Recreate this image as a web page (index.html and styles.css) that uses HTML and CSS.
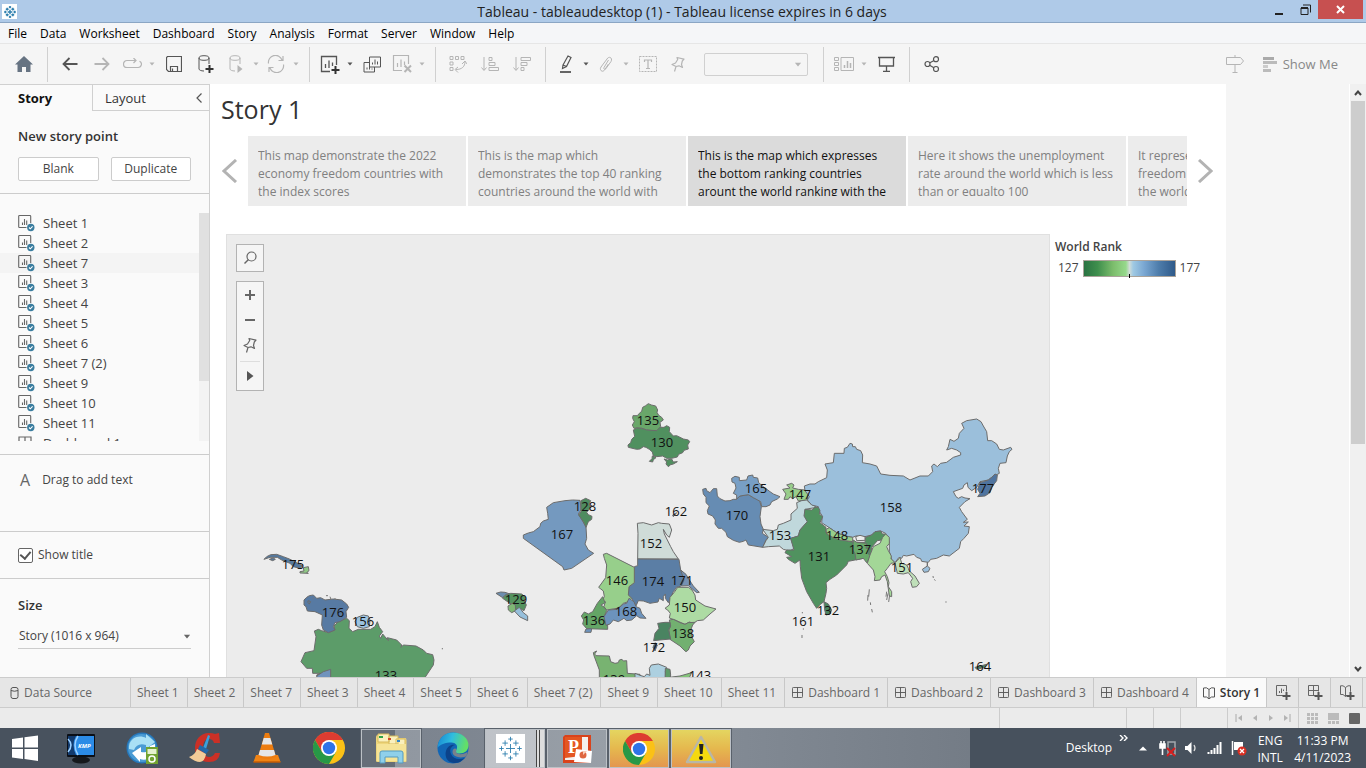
FILE: index.html
```html
<!DOCTYPE html>
<html lang="en">
<head>
<meta charset="utf-8">
<title>Tableau - tableaudesktop (1)</title>
<link rel="stylesheet" href="styles.css">
</head>
<body>
<svg class="defs" aria-hidden="true">
  <symbol id="logo" viewBox="0 0 30 30"><path d="M15 10v10M10 15h10M15 2v5M12.500 4.500h5M15 23v5M12.500 25.500h5M2.500 15h5M5 12.500v5M22.500 15h5M25 12.500v5M9 6v6M6 9h6M21 6v6M18 9h6M9 18v6M6 21h6M21 18v6M18 21h6" fill="none" stroke="#2e7fae"/></symbol>
  <symbol id="sheet" viewBox="0 0 18 18"><path d="M8.500 13.500h-7a.8.8 0 0 1-.8-.8V2.300a.8.8 0 0 1 .8-.8h10.400a.8.8 0 0 1 .8.800V9M4.500 11V8.500M6.500 11V5M8.700 11V6.500" fill="none" stroke="#666" stroke-width="1.100"/><circle cx="12.800" cy="13.500" r="3.700" fill="#3a7d9f"/><path d="M11 13.500l1.300 1.300 2.300-2.500" fill="none" stroke="#fff" stroke-width="1.100"/></symbol>
  <symbol id="dash" viewBox="0 0 12 12"><path d="M.5 1.500a1 1 0 0 1 1-1h9a1 1 0 0 1 1 1v9a1 1 0 0 1-1 1h-9a1 1 0 0 1-1-1zM6 .5v11M.5 6h11" fill="none" stroke="#555"/></symbol>
  <symbol id="book" viewBox="0 0 12 12"><path d="M.5 1L3.500 .8 6 2.500 8.500 .8 11.500 1v9H8.500L6 11.800 3.500 10H.5zM6 2.500v9" fill="none" stroke="#555"/></symbol>
  <symbol id="caret" viewBox="0 0 6 4"><path d="M.5 .5h5L3 3.500z" fill="currentColor"/></symbol>
  <symbol id="pin" viewBox="0 0 14 16"><path d="M6 1.500L13 3.200 11.300 5 10.500 8.500 11.500 11.500 8 9.800 5 10.500 1 8.500 4.500 7 6.700 3.500zM5 10.500L3.500 15.500" fill="none" stroke="currentColor" stroke-width="1.200" stroke-linejoin="round"/></symbol>
  <symbol id="chrome" viewBox="0 0 32 32"><circle cx="16" cy="16" r="16" fill="#fbc116"/><path d="M2.100 8A16 16 0 0 1 29.900 8H16L9 20z" fill="#dd3c31"/><path d="M2.100 8A16 16 0 0 0 16 32l7-12-7 3.500-7-3.500z" fill="#279847"/><circle cx="16" cy="16" r="8" fill="#fff"/><circle cx="16" cy="16" r="6.200" fill="#2f73e8"/></symbol>
</svg>

<header class="titlebar">
  <span class="app-icon"><svg width="14" height="14"><use href="#logo"/></svg></span>
  <h1 class="window-title">Tableau - tableaudesktop (1) - Tableau license expires in 6 days</h1>
  <div class="window-controls">
    <button class="win-btn" aria-label="Minimize"><svg width="10" height="12"><path d="M1 9h8v2H1z" fill="#222"/></svg></button>
    <button class="win-btn" aria-label="Restore"><svg width="11" height="12"><path d="M3 1h7.500v7.500M1 4h7v6.500H1z" fill="none" stroke="#222"/><path d="M1 3h7v2H1z" fill="#222"/></svg></button>
    <button class="win-btn close" aria-label="Close"><svg width="9" height="9"><path d="M1 1l7 7M8 1L1 8" stroke="#fff" stroke-width="2"/></svg></button>
  </div>
</header>

<nav class="menubar">
  <button>File</button><button>Data</button><button>Worksheet</button><button>Dashboard</button><button>Story</button><button>Analysis</button><button>Format</button><button>Server</button><button>Window</button><button>Help</button>
</nav>

<div class="toolbar">
  <button class="tool" aria-label="Home"><svg width="18" height="16"><path d="M9 0L18 8.500h-2.500V16h-4.500v-5H7v5H2.500V8.500H0z" fill="#667382"/></svg></button>
  <span class="sep"></span>
  <button class="tool dark" aria-label="Back"><svg width="16" height="14"><path d="M15.500 7H1.500M7.500 1l-6 6 6 6" fill="none" stroke="currentColor" stroke-width="1.800"/></svg></button>
  <button class="tool" aria-label="Forward"><svg width="16" height="14"><path d="M.5 7h14M8.500 1l6 6-6 6" fill="none" stroke="currentColor" stroke-width="1.800"/></svg></button>
  <button class="tool slim" aria-label="Redo"><svg width="19" height="12"><path d="M6 2.500H4a3.300 3.300 0 0 0 0 7h11a3.300 3.300 0 0 0 1.500-6.300M5 2.500h8M10.500 0L13 2.500 10.500 5" fill="none" stroke="currentColor" stroke-width="1.200"/></svg></button>
  <button class="drop" aria-label="Redo options"><svg width="6" height="4"><use href="#caret"/></svg></button>
  <button class="tool dark" aria-label="Save"><svg width="16" height="16"><path d="M1.500 .5h14v15h-13l-2-2V1.500zM4.500 15v-4.500h7V15M6.500 15v-2.500" fill="none" stroke="currentColor" stroke-width="1.200"/></svg></button>
  <button class="tool dark" aria-label="New data source"><svg width="16" height="18"><ellipse cx="6" cy="3" rx="5" ry="2.300" fill="none" stroke="currentColor"/><path d="M1 3v11c0 1 2 2 5 2M11 3v6" fill="none" stroke="currentColor"/><path d="M11.500 10v8M7.500 14h8" stroke="#333" stroke-width="2"/></svg></button>
  <button class="tool slim" aria-label="Pause updates"><svg width="15" height="18"><ellipse cx="6" cy="3" rx="5" ry="2.300" fill="none" stroke="currentColor"/><path d="M1 3v11c0 1 2 2 5 2M11 3v6" fill="none" stroke="currentColor"/><path d="M8.500 10l5 4-5 4z" fill="currentColor"/></svg></button>
  <button class="drop" aria-label="Update options"><svg width="6" height="4"><use href="#caret"/></svg></button>
  <button class="tool slim" aria-label="Refresh"><svg width="18" height="18"><path d="M1.500 8.500A7 7 0 0 1 15 5M16.500 9.500A7 7 0 0 1 3 13M16 1v4.500h-4.500M2 17v-4.500h4.500" fill="none" stroke="currentColor" stroke-width="1.200"/></svg></button>
  <button class="drop" aria-label="Refresh options"><svg width="6" height="4"><use href="#caret"/></svg></button>
  <span class="sep"></span>
  <button class="tool slim dark" aria-label="New worksheet"><svg width="20" height="19"><path d="M10 16.500H1.500V1.500h15V10M5.500 13V9M9 13V5.500M12.500 11V7.500" fill="none" stroke="currentColor" stroke-width="1.300"/><path d="M15.500 11v8M11.500 15h8" stroke="#333" stroke-width="2"/></svg></button>
  <button class="drop dark" aria-label="New sheet options"><svg width="6" height="4"><use href="#caret"/></svg></button>
  <button class="tool dark" aria-label="Duplicate"><svg width="18" height="17"><path d="M6.500 1h11v10h-11zM9.500 8.500v-2M12 8.500v-5M14.500 8.500v-3M6 6.500H1v9.500h10.500V11M4 13.500v-2M6.500 13.500v-3M9 13.500v-1" fill="none" stroke="currentColor"/></svg></button>
  <button class="tool slim" aria-label="Clear sheet"><svg width="20" height="18"><path d="M10 15.500H1.500V.5h15V9M5.500 12V8M9 12V4.500M12.500 10V6.500" fill="none" stroke="currentColor" stroke-width="1.200"/><path d="M12.500 10.500l6.500 6.500M19 10.500L12.500 17" stroke="currentColor" stroke-width="2"/></svg></button>
  <button class="drop" aria-label="Clear options"><svg width="6" height="4"><use href="#caret"/></svg></button>
  <span class="sep"></span>
  <button class="tool" aria-label="Swap rows and columns"><svg width="18" height="18"><path d="M1 1.500h3v3H1zM6.500 1.500h3v3h-3zM12 1.500h3v3h-3zM1 7h3v3H1zM1 12.500h3v3H1zM16 6.500c0 5-3 8-9 8M13 9l3-3 2 3M9 12l-3 2.500 3 3" fill="none" stroke="currentColor"/></svg></button>
  <button class="tool" aria-label="Sort ascending"><svg width="18" height="16"><path d="M3 1v13M.5 11.500L3 14.500l2.500-3M8 1.500h3v3H8zM8 6.500h6v3H8zM8 11.500h9.500v3H8z" fill="none" stroke="currentColor"/></svg></button>
  <button class="tool" aria-label="Sort descending"><svg width="18" height="16"><path d="M3 1v13M.5 11.500L3 14.500l2.500-3M8 1.500h9.500v3H8zM8 6.500h6v3H8zM8 11.500h3v3H8z" fill="none" stroke="currentColor"/></svg></button>
  <span class="sep"></span>
  <button class="tool slim dark" aria-label="Highlight"><svg width="14" height="18"><path d="M1 17h11" stroke="currentColor" stroke-width="1.800"/><path d="M4 10L9 1l3 1.500-4.500 9L3.500 13.500zM4 10l3.500 1.500" fill="none" stroke="currentColor" stroke-width="1.200"/></svg></button>
  <button class="drop dark" aria-label="Highlight options"><svg width="6" height="4"><use href="#caret"/></svg></button>
  <button class="tool slim" aria-label="Group"><svg width="14" height="16"><path d="M9.500 4L5 11.500c-.8 1.500 1 2.500 2 1L12 5.500c2-3.500-2-6-4-2.500L2 11c-2 3 1.500 6 3.500 3l4-6" fill="none" stroke="currentColor"/></svg></button>
  <button class="drop" aria-label="Group options"><svg width="6" height="4"><use href="#caret"/></svg></button>
  <button class="tool" aria-label="Show mark labels"><svg width="18" height="16"><path d="M.5 .5h17v15H.5z" fill="none" stroke="currentColor" stroke-dasharray="2 1"/><path d="M5.500 6V4h7v2M9 4v8.500M7 12.500h4" fill="none" stroke="currentColor" stroke-width="1.200"/></svg></button>
  <button class="tool slim" aria-label="Fix axes"><svg width="14" height="16"><use href="#pin"/></svg></button>
  <button class="fit" aria-label="Fit"><svg width="8" height="5" viewBox="0 0 6 4"><use href="#caret"/></svg></button>
  <span class="sep"></span>
  <button class="tool slim" aria-label="Show cards"><svg width="20" height="15"><path d="M.5 .5h4v3h-4zM.5 5.500h4v3h-4zM.5 10.500h4v3h-4zM7 .5h12.500v13H7z" fill="none" stroke="currentColor"/><path d="M10.500 11V8M13.500 11V4M16.500 11V6" stroke="currentColor" stroke-width="1.500"/></svg></button>
  <button class="drop" aria-label="Card options"><svg width="6" height="4"><use href="#caret"/></svg></button>
  <button class="tool dark" aria-label="Presentation mode"><svg width="17" height="16"><path d="M0 1.500h17M1.500 1.500v8.500h14V1.500M8.500 10v5M5 15.300h7" fill="none" stroke="currentColor" stroke-width="1.300"/></svg></button>
  <span class="sep"></span>
  <button class="tool dark" aria-label="Share"><svg width="16" height="16"><path d="M3.500 8L12 3.500M3.500 8l8.500 5" stroke="currentColor" stroke-width="1.200"/><g fill="#f5f5f5" stroke="currentColor" stroke-width="1.200"><circle cx="3.500" cy="8" r="2.500"/><circle cx="12" cy="3.200" r="2.500"/><circle cx="12" cy="13" r="2.500"/></g></svg></button>
  <span class="spacer"></span>
  <button class="tool" aria-label="Guide"><svg width="18" height="18"><path d="M9 0v2M.5 2.500h14l3 3.500-3 3.500H.5zM9 9.500v8M6.500 17.500h5" fill="none" stroke="currentColor"/></svg></button>
  <button class="show-me"><svg width="14" height="15"><path d="M0 0h11v3H0z" fill="#aaa"/><path d="M0 4h14v3H0zM0 12h8v3H0z" fill="#bbb"/><path d="M0 8h5v3H0z" fill="#ccc"/></svg>Show Me</button>
</div>

<main class="workspace">
  <aside class="side">
    <div class="side-tabs">
      <button class="side-tab active">Story</button>
      <button class="side-tab">Layout<svg width="6" height="10"><path d="M5.500 .5L1 5l4.500 4.500" fill="none" stroke="#555" stroke-width="1.200"/></svg></button>
    </div>
    <section class="panel new-point">
      <h2>New story point</h2>
      <div class="point-buttons"><button>Blank</button><button>Duplicate</button></div>
    </section>
    <section class="panel sheets">
      <div class="sheet-scroll">
        <ul>
          <li><svg><use href="#sheet"/></svg>Sheet 1</li>
          <li><svg><use href="#sheet"/></svg>Sheet 2</li>
          <li class="hover"><svg><use href="#sheet"/></svg>Sheet 7</li>
          <li><svg><use href="#sheet"/></svg>Sheet 3</li>
          <li><svg><use href="#sheet"/></svg>Sheet 4</li>
          <li><svg><use href="#sheet"/></svg>Sheet 5</li>
          <li><svg><use href="#sheet"/></svg>Sheet 6</li>
          <li><svg><use href="#sheet"/></svg>Sheet 7 (2)</li>
          <li><svg><use href="#sheet"/></svg>Sheet 9</li>
          <li><svg><use href="#sheet"/></svg>Sheet 10</li>
          <li><svg><use href="#sheet"/></svg>Sheet 11</li>
          <li><svg viewBox="0 0 18 18"><path d="M1 3h12v11H1zM7 3v11M1 8h12" fill="none" stroke="#666" stroke-width="1.200"/></svg>Dashboard 1</li>
        </ul>
        <div class="side-track"><div class="side-thumb"></div></div>
      </div>
    </section>
    <section class="panel drag"><span class="letter">A</span>Drag to add text</section>
    <section class="panel title-toggle"><label><input type="checkbox" checked>Show title</label></section>
    <section class="panel size">
      <h2><label for="size">Size</label></h2>
      <div class="select-wrap"><select id="size"><option>Story (1016 x 964)</option></select><svg width="8" height="5" viewBox="0 0 6 4"><use href="#caret"/></svg></div>
    </section>
  </aside>

  <div class="canvas">
    <article class="story">
      <h2 class="story-title">Story 1</h2>
      <div class="navigator">
        <button class="nav-arrow" aria-label="Previous"><svg width="16" height="24"><path d="M14 1L2 12l12 11" fill="none" stroke="#b3b3b3" stroke-width="3"/></svg></button>
        <div class="captions">
          <button class="caption"><span>This map demonstrate the 2022 economy freedom countries with the index scores</span></button>
          <button class="caption"><span>This is the map which demonstrates the top 40 ranking countries around the world with</span></button>
          <button class="caption current"><span>This is the map which expresses the bottom ranking countries arount the world ranking with the</span></button>
          <button class="caption"><span>Here it shows the unemployment rate around the world which is less than or equalto 100</span></button>
          <button class="caption"><span>It represents the<br>freedom of all<br>the world</span></button>
        </div>
        <button class="nav-arrow" aria-label="Next"><svg width="16" height="24"><path d="M2 1l12 11L2 23" fill="none" stroke="#b3b3b3" stroke-width="3"/></svg></button>
      </div>
      <div class="view">
        <figure class="map">
          <svg class="world" viewBox="227 235 822 442" role="img" aria-label="World Rank map">
            <g class="land" transform="translate(480 390) scale(.33333)">
              <path fill="#69a76a" d="M462 115L457 105 463 95 458 85 459 77 472 77 478 70 485 64 488 52 497 47 505 41 514 45 527 48 533 60 531 67 536 76 545 82 550 90 540 97 542 110 530 123 500 120 485 115 470 114Z"/>
              <path fill="#50905f" d="M460 120L470 114 485 115 500 120 530 122 540 112 552 112 560 107 569 112 568 125 580 138 590 137 600 142 610 147 625 150 629 155 623 165 625 177 612 181 608 188 596 193 592 201 575 205 560 205 548 198 530 200 520 198 517 186 508 178 498 172 490 170 480 177 470 178 445 172 444 165 452 158 455 148 464 139Z"/>
              <path fill="#50905f" d="M552 207L562 210 575 207 580 216 592 215 580 222 572 224 565 230 558 222 560 216ZM508 214L516 206 517 198 528 203 520 209 518 216Z"/>
              <path fill="#7499bf" d="M200 352L220 338 255 332 278 330 300 331 302 345 303 360 295 372 318 410 320 445 315 462 325 480 341 490 275 535 252 540 248 530 130 445 130 435 145 429 160 425 180 410 182 400 190 393 205 388 203 370Z"/>
              <path fill="#4f8c5f" d="M303 332L317 325 332 332 327 342 332 352 320 367 325 374 336 379 335 388 325 395 318 412 310 395 296 375 303 365Z"/>
              <path fill="#cfdcd8" d="M472 400L490 398 515 405 535 398 545 400 568 402 575 420 568 442 560 435 550 418 553 432 572 470 580 485 595 507 473 507 474 430Z"/>
              <path fill="#5b7ea5" d="M473 507L597 508 602 540 610 550 622 563 610 575 604 588 590 592 580 605 570 628 565 638 556 625 556 612 550 620 550 632 538 625 534 636 510 640 490 633 475 632 468 648 455 625 445 615 447 590 463 578 463 530 473 527Z"/>
              <path fill="#7591b3" d="M602 540L618 553 628 570 640 588 658 607 650 608 625 587 604 588 612 570Z"/>
              <path fill="#97cf8b" d="M380 490L463 532 463 578 447 590 445 615 455 625 442 636 430 640 420 650 410 655 380 660 372 650 376 635 365 633 373 620 370 603 356 592 377 563 380 525 373 505 370 493Z"/>
              <path fill="#64a566" d="M368 620L373 633 376 638 363 645 372 651 380 662 372 680 383 705 383 718 320 716 308 702 311 690 304 678 313 666 325 672 338 665 352 640Z"/>
              <path fill="#6c93bd" d="M372 680L385 660 412 658 430 642 440 640 447 625 462 635 468 650 480 655 485 670 498 685 480 684 470 677 455 690 440 692 432 685 415 695 400 690 390 702 378 706ZM318 717L335 716 333 727 314 727Z"/>
              <path fill="#addba3" d="M593 592L625 592 636 600 645 615 647 630 675 648 708 657 690 672 670 690 652 692 640 700 628 696 615 703 585 690 568 684 571 670 563 660 555 655 568 645 570 622 582 608Z"/>
              <path fill="#72b070" d="M568 690L580 688 600 698 615 703 625 698 645 697 638 705 633 718 636 742 643 755 630 768 625 780 618 785 612 780 600 768 570 748 566 720 572 708Z"/>
              <path fill="#4a8461" d="M533 700L555 697 570 697 572 708 566 720 572 747 540 750 521 752 525 730 537 715Z"/>
              <path fill="#3d5e85" d="M519 772L525 758 532 765 525 783ZM578 375L590 368 580 380Z"/>
              <path fill="#6c8eae" d="M48 610L62 606 75 607 90 612 75 616 68 623Z"/>
              <path fill="#54935f" d="M68 625L75 616 92 610 125 612 137 622 133 632 139 645 132 662 118 654 108 660 104 645 90 640Z"/>
              <path fill="#7fb775" d="M84 648L97 640 106 645 107 662 95 668 85 660Z"/>
              <path fill="#96bfdb" d="M103 663L118 652 130 668 143 678 143 692 120 681Z"/>
              <path fill="#78b371" d="M342 797L340 788 350 783 344 792 348 797 388 798 392 815 405 820 415 818 418 810 426 808 430 813 440 812 442 850 480 853 478 880 358 880 358 840Z"/>
              <path fill="#add0e0" d="M465 850L480 856 493 860 500 852 510 856 508 835 514 825 535 822 560 832 556 845 562 880 465 880Z"/>
              <path fill="#5d9c69" d="M556 835L570 838 572 855 568 880 555 880Z"/>
              <path fill="#84c57b" d="M568 862L600 858 635 848 620 880 565 880Z"/>
            </g>
            <g class="land" transform="translate(690 400) scale(.33333)">
              <path fill="#668cb3" d="M38 268L48 265 50 272 60 278 70 266 80 266 82 288 90 296 105 303 120 302 130 298 140 298 150 288 175 284 190 293 208 300 214 320 210 350 213 372 220 388 217 400 235 412 228 420 218 442 175 435 168 420 160 424 148 427 130 421 112 410 108 397 95 385 85 385 75 372 76 360 68 348 54 342 52 332 58 318 48 308 48 292 40 282Z"/>
              <path fill="#789fc5" d="M125 235L135 229 148 232 148 242 170 240 174 228 188 225 190 232 203 234 206 248 220 260 240 275 250 282 270 290 262 297 245 305 240 315 228 320 215 320 212 305 190 293 175 284 150 288 140 297 140 285 130 280 138 264 135 250 126 246Z"/>
              <path fill="#98cd8b" d="M278 268L300 264 290 255 305 250 312 255 308 264 325 268 345 270 355 280 352 300 325 303 318 290 308 296 300 290 295 298 282 298 288 282Z"/>
              <path fill="#c0d8dc" d="M320 308L335 302 350 300 360 310 380 322 345 328 345 345 352 365 330 390 325 408 302 415 312 445 300 453 280 448 268 438 235 440 218 442 228 422 235 412 218 388 250 392 262 388 265 375 280 370 303 360 303 342 322 325Z"/>
              <path fill="#9bbfdb" d="M343 258L360 252 375 252 385 245 410 233 412 210 405 192 430 188 433 160 462 160 463 145 472 142 480 130 487 132 488 140 496 140 500 148 512 152 518 165 517 188 540 192 560 198 572 222 600 226 640 228 660 240 690 228 715 228 728 215 725 198 732 192 742 200 752 190 770 187 790 172 812 165 812 158 800 150 785 145 770 150 775 140 780 118 792 124 805 115 808 100 822 85 815 70 830 62 860 57 873 65 880 78 890 95 893 122 905 122 920 132 928 148 940 150 962 142 966 148 958 155 952 168 948 188 930 190 925 205 928 220 905 232 895 240 870 245 860 262 845 272 834 262 832 248 822 255 818 265 790 275 798 290 805 295 815 290 825 294 840 296 825 305 808 322 815 335 832 358 820 367 835 366 822 378 838 380 835 400 822 415 812 425 808 445 778 468 760 465 740 475 722 478 715 487 695 484 692 476 680 472 672 463 650 468 640 466 635 475 627 472 615 488 605 478 598 455 598 425 590 408 587 400 572 393 555 395 545 405 525 410 498 408 488 412 465 408 440 398 418 383 395 368 397 348 385 330 385 320 365 315 352 300 358 290 345 272ZM712 487L712 498 720 505 715 515 702 517 697 508 712 498Z"/>
              <path fill="#50925f" d="M345 328L365 330 375 322 385 322 390 332 388 342 398 350 390 368 408 382 408 398 430 412 490 427 525 427 527 412 545 405 555 395 572 393 577 402 587 402 575 420 562 422 545 442 545 455 535 480 528 470 520 475 495 480 475 484 470 495 440 525 420 538 408 548 410 565 408 580 402 605 392 612 380 625 370 610 350 575 335 535 331 500 330 480 315 490 295 478 290 472 305 470 285 458 290 450 312 450 302 415 325 408 330 390 352 365 342 348Z"/>
              <path fill="#97cf8b" d="M408 388L418 383 440 398 465 408 488 412 488 425 450 420 430 413 410 402Z"/>
              <path fill="#68a96a" d="M490 420L500 427 530 430 528 445 540 445 535 462 542 468 530 488 520 475 498 480 495 460 488 450Z"/>
              <path fill="#ececec" d="M497 410L510 406 525 410 525 421 500 422Z"/>
              <path fill="#a3d797" d="M587 402L598 412 598 430 590 440 595 452 604 468 603 476 615 488 603 490 592 505 584 515 592 530 597 548 595 560 605 575 605 590 598 588 592 545 585 525 575 530 570 540 553 542 555 530 550 510 532 490 540 465 550 440 570 430 578 412Z"/>
              <path fill="#bfe0b9" d="M615 488L622 482 630 472 635 490 650 495 655 505 657 512 675 528 688 550 680 560 667 562 662 545 668 535 655 518 640 522 622 520Z"/>
              <path fill="#4f749f" d="M863 290L870 280 863 268 870 248 880 245 895 240 905 232 915 222 922 225 920 242 905 262 900 278 885 288Z"/>
              <path fill="#4a8461" d="M402 605L415 612 425 630 420 642 408 645 404 630ZM855 802L890 793 885 802 860 808Z"/>
              <path class="islets" d="M538 568L536 590M534 585L533 602M541 607L542 615M545 627L547 637M590 575L588 590M594 580L590 600M599 585L596 606M729 528L730 534M733 538L736 542M768 604v4M337 636v4M340 685v4M336 705v9"/>
            </g>
            <g class="land" transform="translate(250 530) scale(.33333)">
              <path fill="#54799f" d="M42 88L50 80 62 74 80 73 100 80 118 87 140 98 158 108 150 115 130 110 120 100 95 90 82 82 60 82ZM58 88L70 84 76 88 68 92Z"/>
              <path fill="#8fc785" d="M160 113L175 110 177 122 170 128 175 130 150 129 150 125 162 123Z"/>
              <path fill="#5c9c69" d="M193 303L205 298 215 302 235 308 255 300 252 288 265 275 290 265 298 272 297 295 308 305 325 298 362 298 375 290 382 275 388 292 398 305 388 318 392 325 398 312 415 332 412 323 440 330 455 345 453 352 460 345 498 348 520 360 530 370 548 374 552 390 550 405 520 450 205 450 200 435 212 430 188 430 187 415 170 415 153 395 165 368 192 362 198 320Z"/>
              <path fill="#577aa3" d="M162 210L170 202 178 197 190 195 200 205 212 203 225 210 250 207 275 210 290 222 296 232 288 245 290 262 270 275 255 278 250 290 255 300 235 308 220 300 215 285 217 255 195 245 172 243 168 230 162 225ZM175 212L182 215 178 222 173 217Z"/>
              <path fill="#9cc3e0" d="M322 262L340 255 355 258 360 270 358 290 340 295 322 290 315 275Z"/>
              <path fill="#7093bd" d="M200 438L220 425 242 418 242 450 205 450Z"/>
              <path class="islets" d="M228 197h6M240 200l3 8M252 207h6M190 203v3M577 354v4"/>
            </g>
            <g class="marks">
              <text x="648" y="425">135</text><text x="662" y="447">130</text><text x="585" y="511">128</text><text x="562" y="539">167</text><text x="676" y="516">162</text><text x="651" y="548">152</text><text x="617" y="585">146</text><text x="653" y="586">174</text><text x="682" y="585">171</text><text x="516" y="604">129</text><text x="626" y="616">168</text><text x="685" y="612">150</text><text x="594" y="625">136</text><text x="683" y="638">138</text><text x="654" y="652">172</text><text x="614" y="684">139</text><text x="700" y="680">143</text>
              <text x="756" y="493">165</text><text x="737" y="520">170</text><text x="800" y="499">147</text><text x="780" y="540">153</text><text x="837" y="540">148</text><text x="819" y="561">131</text><text x="860" y="554">137</text><text x="891" y="512">158</text><text x="983" y="493">177</text><text x="902" y="572">151</text><text x="828" y="615">132</text><text x="803" y="626">161</text><text x="980" y="671">164</text>
              <text x="293" y="569">175</text><text x="333" y="617">176</text><text x="363" y="626">156</text><text x="386" y="680">133</text>
            </g>
          </svg>
          <div class="map-tools">
            <button class="map-btn" aria-label="Search"><svg width="14" height="14"><circle cx="8.500" cy="5.500" r="4.500" fill="none" stroke="#666" stroke-width="1.200"/><path d="M5.500 8.500L1.500 12.500" stroke="#666" stroke-width="1.400"/></svg></button>
            <div class="map-group">
              <button aria-label="Zoom in"><svg width="10" height="10"><path d="M5 0v10M0 5h10" stroke="#666" stroke-width="2"/></svg></button>
              <button aria-label="Zoom out"><svg width="10" height="10"><path d="M0 5h10" stroke="#666" stroke-width="2"/></svg></button>
              <button class="pin" aria-label="Pin"><svg width="14" height="16"><use href="#pin"/></svg></button>
              <button class="more" aria-label="Map tools"><svg width="8" height="12"><path d="M1 1l6.500 5L1 11z" fill="#555"/></svg></button>
            </div>
          </div>
        </figure>
        <div class="legend">
          <h3>World Rank</h3>
          <div class="scale"><span>127</span><div class="ramp"></div><span>177</span></div>
        </div>
      </div>
    </article>
    <div class="scrollbar">
      <button aria-label="Scroll up"><svg width="8" height="6"><path d="M1 5l3-3.500L7 5" fill="none" stroke="#444" stroke-width="2"/></svg></button>
      <div class="thumb"></div>
      <button class="down" aria-label="Scroll down"><svg width="8" height="6"><path d="M1 1l3 3.500L7 1" fill="none" stroke="#444" stroke-width="2"/></svg></button>
    </div>
  </div>
</main>

<nav class="sheet-tabs">
  <button class="tab source"><svg width="9" height="12"><rect x="1" y=".5" width="7" height="11" rx="2" fill="none" stroke="#555"/><path d="M1 3.500q3.500 1.500 7 0" fill="none" stroke="#555"/></svg>Data Source</button>
  <button class="tab">Sheet 1</button><button class="tab">Sheet 2</button><button class="tab">Sheet 7</button><button class="tab">Sheet 3</button><button class="tab">Sheet 4</button><button class="tab">Sheet 5</button><button class="tab">Sheet 6</button><button class="tab">Sheet 7 (2)</button><button class="tab">Sheet 9</button><button class="tab">Sheet 10</button><button class="tab">Sheet 11</button>
  <button class="tab dash"><svg width="11" height="11"><use href="#dash"/></svg>Dashboard 1</button>
  <button class="tab dash"><svg width="11" height="11"><use href="#dash"/></svg>Dashboard 2</button>
  <button class="tab dash"><svg width="11" height="11"><use href="#dash"/></svg>Dashboard 3</button>
  <button class="tab dash"><svg width="11" height="11"><use href="#dash"/></svg>Dashboard 4</button>
  <button class="tab open"><svg width="12" height="12"><use href="#book"/></svg>Story 1</button>
  <button class="tab add" aria-label="New worksheet"><svg width="16" height="15"><path d="M8 10.500H1.500V.5h10v6M4.500 8V6M6.500 8V3.500M8.500 6V4.500" fill="none" stroke="#666"/><path d="M11.500 7v8M7.500 11h8" stroke="#555" stroke-width="2"/></svg></button>
  <button class="tab add" aria-label="New dashboard"><svg width="16" height="15"><path d="M8 10.500H1.500V.5h10v6M6.500 .5v10M1.500 5.500h10" fill="none" stroke="#666"/><path d="M11.500 7v8M7.500 11h8" stroke="#555" stroke-width="2"/></svg></button>
  <button class="tab add" aria-label="New story"><svg width="16" height="15"><path d="M8 10L6.500 11.500 4 9.500H1.500V.8H4L6.500 2.500 9 .8h2.500v6M6.500 2.500v9" fill="none" stroke="#666"/><path d="M11.500 7v8M7.500 11h8" stroke="#555" stroke-width="2"/></svg></button>
</nav>

<div class="status">
  <span class="cell wide"></span><span class="cell"></span><span class="cell"></span><span class="cell mid"></span>
  <div class="cell pager">
    <button aria-label="First"><svg width="8" height="8"><path d="M1 0v8" stroke="#aaa"/><path d="M7 1v6L3 4z" fill="#b3b3b3"/></svg></button>
    <button aria-label="Previous sheet"><svg width="8" height="8"><path d="M6 1v6L2 4z" fill="#b3b3b3"/></svg></button>
    <button aria-label="Next sheet"><svg width="8" height="8"><path d="M2 1v6l4-3z" fill="#b3b3b3"/></svg></button>
    <button aria-label="Last"><svg width="8" height="8"><path d="M7 0v8" stroke="#aaa"/><path d="M1 1v6l4-3z" fill="#b3b3b3"/></svg></button>
  </div>
  <div class="cell views">
    <button aria-label="Sheet sorter"><svg width="11" height="11"><path d="M0 0h3v3H0zM4 0h3v3H4zM8 0h3v3H8zM0 4h3v3H0zM4 4h3v3H4zM8 4h3v3H8zM0 8h3v3H0zM4 8h3v3H4zM8 8h3v3H8z" fill="#bbb"/></svg></button>
    <button aria-label="Filmstrip"><svg width="11" height="11"><path d="M0 0h11v7H0zM0 8h3v3H0zM4 8h3v3H4zM8 8h3v3H8z" fill="#bbb"/></svg></button>
    <button aria-label="Sheet tabs"><svg width="11" height="11"><rect width="11" height="11" rx="1" fill="#666"/></svg></button>
  </div>
</div>

<footer class="taskbar">
  <button class="start" aria-label="Start"><svg width="28" height="26"><path d="M1 4l11-1.500v10H1zM13.500 2.300L27 .5v12H13.500zM1 14h11v10L1 22.500zM13.500 14H27v12l-13.500-2z" fill="#fff"/></svg></button>
  <button class="task" aria-label="KMPlayer"><svg width="30" height="31"><ellipse cx="15" cy="27" rx="9" ry="3.500" fill="#15181c"/><rect x="1" y="1" width="28" height="23" rx="1" fill="#0b0f16"/><rect x="2" y="3" width="26" height="19" fill="#2b8be6"/><path d="M2 3h8q-5 9 0 19H2z" fill="#123a6d"/><path d="M2 6q6 6 0 13M12 3q-6 9 0 19" fill="none" stroke="#9bd0ff" stroke-width="1.500"/><text x="12" y="15" font-size="6" font-weight="700" font-style="italic" fill="#fff">KMP</text></svg></button>
  <button class="task" aria-label="Media converter"><svg width="34" height="32"><circle cx="16" cy="16" r="15.500" fill="#2678bb"/><circle cx="16" cy="16" r="14" fill="#4a9bd4"/><path d="M3 17C2 6 13 2 20 6V2l9 8-9 7v-4c-6-2-10 0-12 5z" fill="#a9e0f5"/><path d="M29 12c1 12-8 18-15 15v3l-8-9 9-6v5c6 1 8-1 9-6z" fill="#fff"/><rect x="20" y="15" width="12" height="17" fill="#72a331"/><rect x="21.500" y="17" width="9" height="5" fill="#e6f2ce"/><circle cx="26" cy="27" r="3" fill="#72a331" stroke="#fff" stroke-width="1.500"/></svg></button>
  <button class="task" aria-label="CCleaner"><svg width="34" height="32"><path d="M32 11h-6q-1-4-5-4c-5 0-6 5-6 9s2 9 6 9q4 0 6-4h5q-1 9-11 9C12 30 7 24 7 16S12 1 21 1q4 0 6 1l4-1z" fill="#cb3026"/><path d="M20 3l2 1-4 13-3-1z" fill="#3aa0dd"/><path d="M12 13l9 5-3 4-8-5z" fill="#2468a7"/><path d="M9 17l9 5q-1 7-6 8-5 0-11-5 6-2 8-8z" fill="#f2cb98"/></svg></button>
  <button class="task" aria-label="VLC"><svg width="28" height="32"><path d="M3 23h22l2.500 7H.5z" fill="#f08313"/><path d="M12 1h4l7 24q-9 4-18 0z" fill="#ee7d0f"/><path d="M10.700 6h6.600l2 6.500H8.800zM7 18h14l1.500 5q-8 3-17 0z" fill="#e6e6e6"/><path d="M.5 30h27" stroke="#c45b05" stroke-width="1.500"/></svg></button>
  <button class="task" aria-label="Chrome"><svg width="32" height="32"><use href="#chrome"/></svg></button>
  <button class="task framed" aria-label="File Explorer"><svg width="34" height="32"><path d="M2 4q0-2 2-2h7l2 3h18q1.500 0 1.500 2v21q0 1-1 1h-28q-1.500 0-1.500-1z" fill="#eed67c"/><path d="M4 1h11v8H4zM15 3h9v8h-9zM22 6h9v6h-9z" fill="#faf0bd" stroke="#d8bb5b"/><path d="M5 3h4v2H5z" fill="#2ca44b"/><path d="M14 5h3v2h-3z" fill="#d04629"/><path d="M23 7h3v2h-3z" fill="#3186cb"/><path d="M3 11h29v17H3z" fill="#f6e497"/><path d="M6 30V20q0-2 2-2h19q2 0 2 2v10h-5v-6H11v6z" fill="#8fd0ea" stroke="#559bc0"/></svg></button>
  <button class="task" aria-label="Edge"><svg width="32" height="32"><defs><linearGradient id="eg" x2="1" y2=".2"><stop stop-color="#1685d2"/><stop offset=".5" stop-color="#30bddf"/><stop offset="1" stop-color="#63df67"/></linearGradient></defs><circle cx="16" cy="16" r="15.500" fill="#1266b5"/><path d="M.5 16C1 6 8 .5 16 .5c9 0 15.500 6 15.500 13 0 5-4 8-9 8-4 0-5-2-3-4 2-4-1-7-5-7-6 0-12 2-14 5.500z" fill="url(#eg)"/><path d="M18 13c-4 1-6 5-4 9 2 5 8 6 14 4l-5 4C12 34 7 26 9 19c1-4 5-7 9-6z" fill="#0c438a"/><path d="M19.500 18c-2 4 4 6 11 2l-1 4c-5 3-14 1-14-4 0-3 3-5 4-2z" fill="#78818c"/></svg></button>
  <button class="task framed stacked" aria-label="Tableau"><span class="tile"><svg width="27" height="27"><use href="#logo"/></svg></span></button>
  <button class="task framed" aria-label="PowerPoint"><svg width="30" height="30"><path d="M3 1h26v28H1V3z" fill="#d9431c"/><path d="M4 3h22v23H3z" fill="#f4f0ed"/><path d="M3 3h17v19L3 24z" fill="#e45622"/><path d="M14 15l16 2-1 12-17-1z" fill="#fff"/><circle cx="21" cy="21" r="3.500" fill="#df6741"/><path d="M21 21v-4h4z" fill="#f9ceba"/><text x="6" y="19" font-size="18" font-weight="700" fill="#fff" class="serif">P</text></svg></button>
  <button class="task framed alert" aria-label="Chrome notification"><svg width="32" height="32"><use href="#chrome"/></svg></button>
  <button class="task framed alert" aria-label="Warning"><svg width="32" height="30"><path d="M16 3L30 28H2z" fill="#f5d90e" stroke="#b8b6a8" stroke-width="2.500" stroke-linejoin="round"/><path d="M14 10h4.500l-1 10h-2.500z" fill="#222"/><circle cx="16" cy="24" r="2" fill="#222"/></svg></button>
  <span class="spacer"></span>
  <div class="tray">
    <span class="desk">Desktop</span><span class="chev"><svg width="9" height="6"><path d="M1 0l3 3-3 3M5 0l3 3-3 3" fill="none" stroke="#fff" stroke-width="1.400"/></svg></span>
    <button aria-label="Show hidden icons"><svg width="8" height="5"><path d="M0 4.500L4 .5l4 4z" fill="#fff"/></svg></button>
    <button aria-label="Power"><svg width="17" height="17"><path d="M2 1v3M5 1v3M1 4h5v4H1zM3.500 8v7" stroke="#fff" stroke-width="1.600" fill="#fff"/><rect x="9" y="2" width="7" height="12" fill="#47515d" stroke="#a3a8ad" stroke-width="1.500"/><path d="M8 8l8 8M16 8l-8 8" stroke="#d61e1e" stroke-width="2"/></svg></button>
    <button aria-label="Volume"><svg width="14" height="14"><path d="M1 5h2.500l4-4v12l-4-4H1z" fill="#fff"/><path d="M10 4q2 3 0 6" fill="none" stroke="#ddd" stroke-width="1.300"/></svg></button>
    <button aria-label="Network"><svg width="16" height="14"><path d="M1.500 13v-2M4.500 13V9M7.500 13V7M10.500 13V4M13.500 13V1" stroke="#fff" stroke-width="2"/></svg></button>
    <button aria-label="Action center"><svg width="16" height="16"><path d="M1.500 1v14" stroke="#fff" stroke-width="1.500"/><path d="M3 2h9v8H3z" fill="#fff"/><circle cx="11" cy="11" r="4.500" fill="#d92e22"/><path d="M9 9l4 4M13 9l-4 4" stroke="#fff" stroke-width="1.300"/></svg></button>
    <div class="lang">ENG<br>INTL</div>
    <div class="clock">11:33 PM<br>4/11/2023</div>
  </div>
</footer>
</body>
</html>
```

FILE: styles.css
```css
* { box-sizing: border-box; }
html, body { height: 100%; }
body { margin: 0; display: flex; flex-direction: column; overflow: hidden; background: #f5f5f5; color: #444; font: 12px/18px "Open Sans", "Noto Sans", sans-serif; }
button { margin: 0; padding: 0; border: 0; background: none; color: inherit; font: inherit; }
svg { display: block; flex: none; }
h1, h2, h3, ul, figure { margin: 0; padding: 0; }
.defs { position: absolute; width: 0; height: 0; }
.spacer { flex: 1; }

.titlebar { flex: none; display: flex; height: 23px; background: #afcae8; border-bottom: 1px solid #8ba6c4; }
.app-icon { display: flex; align-items: center; justify-content: center; width: 15px; height: 15px; margin: 4px 0 0 2px; background: #fff; stroke-width: 3px; }
.window-title { flex: 1; padding-left: 81px; text-align: center; font-size: 14px; font-weight: 400; line-height: 23px; color: #222; }
.window-controls { display: flex; padding-right: 3px; }
.win-btn { display: flex; align-items: center; justify-content: center; width: 26px; height: 19px; }
.win-btn.close { width: 45px; background: #c75050; }

.menubar { flex: none; display: flex; gap: 13px; height: 21px; padding: 2px 0 0 8px; background: #f5f6f8; border-bottom: 1px solid #e6e6e6; color: #000; }

.toolbar { flex: none; display: flex; align-items: center; height: 40px; padding: 0 28px 0 8px; background: #f5f5f5; color: #b5b5b5; }
.tool { display: flex; justify-content: center; width: 32px; }
.tool.slim { width: 28px; }
.drop { display: flex; justify-content: center; width: 12px; }
.dark { color: #555; }
.sep { width: 14px; height: 35px; background: linear-gradient(#d0d0d0, #d0d0d0) center / 1px 100% no-repeat; }
.fit { display: flex; align-items: center; justify-content: flex-end; width: 104px; height: 23px; margin: 0 8px 0 12px; padding-right: 5px; border: 1px solid #d0d0d0; border-radius: 2px; }
.show-me { display: flex; align-items: center; gap: 6px; margin-left: 12px; font-size: 13px; color: #888; }

.workspace { flex: 1; min-height: 0; display: flex; }
.side { flex: none; display: flex; flex-direction: column; width: 210px; background: #fafafa; border-top: 1px solid #d0d0d0; border-right: 1px solid #d0d0d0; }
.side-tabs { flex: none; display: grid; grid-template-columns: 92px 1fr; height: 26px; }
.side-tab { display: flex; align-items: center; justify-content: space-between; padding: 0 7px 0 12px; border-left: 1px solid #d0d0d0; border-bottom: 1px solid #d0d0d0; font-size: 13px; color: #333; }
.side-tab.active { padding-left: 18px; border: 0; font-weight: 700; color: #111; }
.panel { flex: none; border-bottom: 1px solid #ccc; }
.panel h2 { font-size: 13px; font-weight: 600; line-height: 18px; color: #333; }
.new-point { height: 83px; padding: 16px 18px 0; }
.point-buttons { display: grid; grid-template-columns: 1fr 1fr; gap: 12px; margin-top: 12px; }
.point-buttons button { height: 24px; background: #fff; border: 1px solid #ccc; border-radius: 2px; }
.sheets { height: 261px; padding-top: 19px; }
.sheet-scroll { display: flex; height: 228px; overflow: hidden; }
.sheet-scroll ul { flex: 1; list-style: none; }
.sheet-scroll li { display: flex; align-items: center; gap: 7px; height: 20px; padding-left: 18px; font-size: 13px; line-height: 20px; }
.sheet-scroll li svg { width: 18px; height: 18px; }
.sheet-scroll li.hover { background: #f4f4f4; }
.side-track { width: 10px; background: #f3f3f3; }
.side-thumb { height: 168px; background: #e0e0e0; }
.drag { display: flex; gap: 12px; height: 77px; padding: 16px 20px 0; }
.letter { font-size: 16px; color: #666; }
.title-toggle { height: 47px; padding: 14px 18px 0; }
.title-toggle label { display: flex; align-items: center; gap: 5px; }
.title-toggle input { appearance: none; width: 15px; height: 15px; margin: 0; border: 1px solid #666; border-radius: 2px; background: #fff; display: grid; place-items: center; }
.title-toggle input:checked::after { content: ""; width: 5px; height: 8px; margin-bottom: 2px; border: solid #555; border-width: 0 2px 2px 0; transform: rotate(40deg); }
.size { flex: 1; padding: 17px 18px 0; border: 0; }
.select-wrap { display: flex; align-items: center; height: 25px; margin-top: 10px; border-bottom: 1px solid #ccc; color: #666; }
.select-wrap select { flex: 1; appearance: none; padding: 0 1px; border: 0; background: none; font: inherit; color: #444; }

.canvas { flex: 1; min-width: 0; display: flex; justify-content: space-between; overflow: hidden; background: #f5f5f5; }
.story { flex: 0 1 1016px; min-width: 0; display: flex; flex-direction: column; background: #fff; }
.story-title { flex: none; padding: 8px 11px 0; font-size: 25px; font-weight: 400; line-height: 34px; color: #333; }
.navigator { flex: none; display: flex; align-items: center; justify-content: space-between; gap: 10px; height: 70px; margin-top: 10px; padding: 0 13px 0 12px; }
.captions { flex: 1; min-width: 0; display: flex; gap: 2px; overflow: hidden; }
.caption { flex: none; width: 218px; height: 70px; padding: 11px 8px 10px 10px; background: #ececec; color: #808080; text-align: left; }
.caption span { display: block; height: 49px; overflow: hidden; }
.caption.current { background: #dbdbdb; color: #111; }
.view { flex: 1; min-height: 0; display: flex; gap: 5px; margin-top: 28px; padding-left: 16px; }
.map { position: relative; flex: 1; min-width: 0; overflow: hidden; background: #ececec; border: 1px solid #e0e0e0; border-bottom: 0; }
.world { width: 100%; height: auto; }
.land path { stroke: #6b6b6b; stroke-width: 3; stroke-linejoin: round; }
.land .islets { fill: none; stroke: #777; }
.marks { font-size: 13px; fill: #111; text-anchor: middle; }
.map-tools { position: absolute; top: 9px; left: 9px; display: grid; gap: 9px; width: 28px; }
.map-btn, .map-group { display: grid; justify-items: center; align-items: center; background: #f5f5f5; border: 1px solid #b3b3b3; color: #666; }
.map-btn { height: 28px; }
.map-group { grid-template-rows: 26px 24px 29px 29px; padding: 0 3px; }
.map-group button { display: flex; align-items: center; justify-content: center; width: 100%; height: 100%; }
.map-group .pin { padding-bottom: 4px; }
.map-group .more { border-top: 1px solid #ddd; }
.legend { flex: none; width: 171px; padding-top: 4px; }
.legend h3 { font-size: 12px; font-weight: 600; line-height: 18px; color: #444; }
.scale { display: flex; align-items: center; gap: 4px; padding-left: 3px; margin-top: 3px; }
.ramp { position: relative; width: 93px; height: 17px; border: 1px solid #aaa39a; background: linear-gradient(90deg, #2a7342, #3f8f4d 15%, #7cbd6c 32%, #96d98b 46%, #d0dcd8 50%, #9fc9e3 54%, #7aa7d2 66%, #4e7dab 82%, #2f5a8a); }
.ramp::after { content: ""; position: absolute; left: 45px; bottom: -2px; width: 1px; height: 4px; background: #000; }
.scrollbar { flex: none; display: flex; flex-direction: column; width: 17px; padding: 0 1px; background: #f0f0f0; border-left: 1px solid #fff; }
.scrollbar button { display: flex; align-items: center; justify-content: center; height: 17px; }
.scrollbar .thumb { height: 343px; background: #cdcdcd; }
.scrollbar .down { margin-top: auto; }

.sheet-tabs { flex: none; display: flex; height: 31px; background: #e6e6e6; border-top: 1px solid #ccc; border-bottom: 1px solid #ccc; color: #666; }
.tab { flex: none; display: flex; align-items: center; padding: 0 8px 0 6px; border-right: 1px solid #c8c8c8; white-space: nowrap; }
.tab.source { width: 131px; gap: 5px; padding-left: 10px; }
.tab.dash { gap: 5px; padding: 0 7px; }
.tab.open { gap: 5px; padding: 0 6px; background: #fafafa; color: #333; font-weight: 600; }
.tab.add { width: 32px; justify-content: center; padding: 0; }

.status { flex: none; display: flex; justify-content: flex-end; height: 20px; background: #ebebeb; }
.cell { width: 27px; border-left: 1px solid #ccc; }
.cell.wide { width: 127px; }
.cell.mid { width: 47px; }
.pager, .views { display: flex; align-items: center; }
.pager { width: 71px; gap: 8px; padding-left: 7px; }
.views { width: 68px; gap: 10px; padding-left: 8px; }

.taskbar { flex: none; display: flex; align-items: stretch; gap: 2px; height: 40px; background: linear-gradient(90deg, #48525e 395px, #7b838e 395px, #868e98 660px, #747c86 970px, #47515d 970px); color: #fff; stroke-width: 1px; }
.start { display: flex; align-items: center; justify-content: center; width: 49px; }
.task { display: flex; align-items: center; justify-content: center; width: 60px; }
.framed { margin-top: 1px; border: 1px solid #bcc1c6; outline: 1px solid #59616b; background: #ffffff2a; }
.stacked { justify-content: flex-start; padding-left: 10px; background: linear-gradient(90deg, #ffffff80 50px, #444 50px, #444 51px, #ddd 51px, #ddd 53px, #444 53px, #444 54px, #ddd 54px); }
.tile { display: grid; place-items: center; width: 29px; height: 29px; background: #fff; }
.alert { background: linear-gradient(#e4d560, #e5b84e 50%, #e3964f); }
.serif { font-family: "Liberation Serif", serif; }
.tray { display: flex; align-items: center; padding-right: 15px; }
.tray button { display: flex; justify-content: center; width: 24px; }
.desk { font-size: 12px; }
.chev { align-self: flex-start; padding: 7px 3px 0 7px; }
.lang, .clock { padding-top: 1px; text-align: center; font-size: 12px; line-height: 17px; }
.lang { width: 38px; margin-right: 5px; }
.clock { white-space: nowrap; }
```
